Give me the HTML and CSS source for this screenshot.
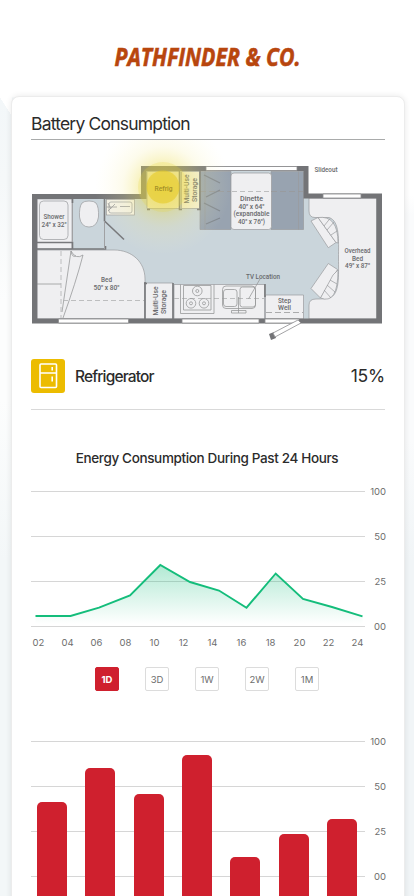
FILE: index.html
```html
<!DOCTYPE html>
<html lang="en">
<head>
<meta charset="utf-8">
<meta name="viewport" content="width=device-width, initial-scale=1">
<title>Pathfinder &amp; Co.</title>
<link rel="stylesheet" href="styles.css">
</head>
<body>
<div class="page">
  <header class="brand">
    <svg width="250" height="40" viewBox="83 36 250 40" role="img" aria-label="Pathfinder &amp; Co.">
      <text class="brand-text" x="114.500" y="66" textLength="186" lengthAdjust="spacingAndGlyphs">PATHFINDER &amp; CO.</text>
    </svg>
  </header>
  <main class="card">
    <h1 class="title"><span>Battery Consumption</span></h1>
    <svg class="plan" width="392" height="219" viewBox="12 140 392 219">
      <defs>
        <radialGradient id="halo">
          <stop offset="0" stop-color="#ebd32c" stop-opacity=".55"/>
          <stop offset=".36" stop-color="#ebdc50" stop-opacity=".36"/>
          <stop offset=".6" stop-color="#f3e98e" stop-opacity=".17"/>
          <stop offset="1" stop-color="#fff8c8" stop-opacity="0"/>
        </radialGradient>
      </defs>
      <path fill="#cad5db" d="M37 198H146V171H304V198H377V319H37z"/>
      <g fill="#efeff1" stroke="#9a9b9d" stroke-width=".7">
        <path d="M37 199H72V249H37z"/>
        <rect x="39.500" y="201" width="28.500" height="38.500" rx="4"/>
        <path d="M37 250H114C132 250 145 262 145 279V319H37z"/>
        <path d="M82 203Q84 201 89 201T96 203Q99 207 98.500 217Q97 227 89 227T79.500 217Q79 207 82 203z"/>
        <rect x="106.500" y="199.500" width="28" height="15.500" fill="#f3f1e8"/>
        <rect x="109" y="202" width="23" height="11" rx="2" fill="#f3f1e8"/>
        <path d="M309 198V211Q309 217.500 315 217.500H329C340 221 338.500 240 338.500 258S340 295 329 298Q326 299 316 299Q309 299 309 305V319H377V198z"/>
        <path d="M311 221L318 217.500L336 242.500L328.300 247.700z"/>
        <path d="M318 217.500Q338 215 338 243L336 242.500zM324 226L330 218.500M327 230L334 222M331 235L337 231"/>
        <path d="M311 288.500L328.300 263.500L337.500 269.500L320.500 298z"/>
        <path d="M320.500 298Q338 305 338 270L333 275zM324 290L331 298M327 285L335 292M330 280L337 284"/>
        <path d="M145 283H173V319H145zM174 284.500H264.500V319H174zM265.500 295H303.500V319H265.500z"/>
        <path fill="#98a3b0" d="M200 171.500H231V229.500H200zM271 171.500H303.500V229.500H271zM205 171.500V229.500M298.500 171.500V229.500"/>
        <rect x="231" y="173" width="40.500" height="56.500" rx="3"/>
        <path fill="#f4efd4" d="M147 171.500H179.500V208.500H147zM181.500 171.500H199.500V208.500H181.500z"/>
      </g>
      <g fill="none" stroke="#98999b" stroke-width=".8">
        <path d="M37 284H61M71 251L62 312M71 251Q76 260 83 255Q76 282 63 318M71 251Q72 258 76 256"/>
        <path stroke-dasharray="5 3" stroke="#b0b1b3" d="M61 251V318M63 300.500H144M174 298.500H264M232 191.500H271"/>
        <path stroke-dasharray="6 3" d="M200 191.500H231M271 191.500H303M266 312.500H303"/>
        <path d="M204 175L220 183M206 197L220 190M204 203L220 211M206 224L220 218" stroke="#7f868f" stroke-width="1.300"/>
        <path d="M180.500 284.500V313.500H214V284.500M183.500 285.500H211V310H183.500zM106.500 207H117M108 203L111 209M108 211L115 204M120 206.500H130"/>
        <circle cx="197.300" cy="291" r="4.800"/><circle cx="197.300" cy="291" r="1.500"/>
        <circle cx="191" cy="303.300" r="4.800"/><circle cx="191" cy="303.300" r="1.500"/>
        <circle cx="204" cy="303.300" r="4.800"/><circle cx="204" cy="303.300" r="1.500"/>
        <rect x="222.500" y="286" width="33" height="22.500" rx="3.500"/>
        <rect x="223.500" y="289.500" width="13.500" height="17" rx="2.500"/>
        <rect x="240" y="287" width="15.500" height="20" rx="2.500"/>
        <path d="M238.500 297V313M231.500 310.500H246V313H231.500zM260 279L248.500 299"/>
      </g>
      <g fill="none" stroke="#77787b" stroke-width="2">
        <path stroke-width="1.600" d="M37 242.500H72.500V249M37 249H105.500V246M72.500 199V203M104.500 199V221L124 239.500M145 282V319M144 283.500H147M173 283V319M179.500 171V209.500H182M200 171V209.500H197M147 209.500H150M265 284V297"/>
        <path stroke-width="1" stroke="#a0a1a3" d="M72.500 203V242M104.500 221V249"/>
      </g>
      <g fill="#737477">
        <path d="M32 194H141V166H308.500V193.500H382V323.500H32zM37.300 199V318.500H376.300V198.500H303.500V171H146.500V199z" fill-rule="evenodd"/>
        <path d="M269 334L274 332L276 338L271 340z"/>
      </g>
      <g fill="#fff" stroke="#8b8c8e" stroke-width=".8">
        <path d="M206 166.500H297V170.500H206zM323 194H361V198H323zM58.500 319H128.500V323H58.500zM182 319H259V323H182zM265 319H299V323H265z"/>
        <path d="M273 333L298 320L301 323L275 337z"/>
      </g>
      <g class="plan-text">
        <text x="54" y="219" textLength="21" lengthAdjust="spacingAndGlyphs">Shower</text>
        <text x="54" y="227" textLength="25" lengthAdjust="spacingAndGlyphs">24" x 32"</text>
        <text x="106.500" y="282" textLength="11" lengthAdjust="spacingAndGlyphs">Bed</text>
        <text x="106.500" y="290" textLength="26" lengthAdjust="spacingAndGlyphs">50" x 80"</text>
        <text transform="translate(189 189) rotate(-90)" textLength="29" lengthAdjust="spacingAndGlyphs">Multi-Use</text>
        <text transform="translate(197 190) rotate(-90)" textLength="24" lengthAdjust="spacingAndGlyphs">Storage</text>
        <text transform="translate(158 301) rotate(-90)" textLength="29" lengthAdjust="spacingAndGlyphs">Multi-Use</text>
        <text transform="translate(166 302) rotate(-90)" textLength="24" lengthAdjust="spacingAndGlyphs">Storage</text>
        <text x="251.500" y="201" textLength="23" lengthAdjust="spacingAndGlyphs">Dinette</text>
        <text x="251.500" y="208.500" textLength="26" lengthAdjust="spacingAndGlyphs">40" x 64"</text>
        <text x="251.500" y="216" textLength="36" lengthAdjust="spacingAndGlyphs">(expandable</text>
        <text x="251.500" y="223.500" textLength="27" lengthAdjust="spacingAndGlyphs">40" x 76")</text>
        <text x="326" y="171.500" textLength="23" lengthAdjust="spacingAndGlyphs">Slideout</text>
        <text x="263" y="279" textLength="34" lengthAdjust="spacingAndGlyphs">TV Location</text>
        <text x="284.500" y="302.500" textLength="13" lengthAdjust="spacingAndGlyphs">Step</text>
        <text x="284.500" y="310" textLength="13" lengthAdjust="spacingAndGlyphs">Well</text>
        <text x="357.500" y="253" textLength="26" lengthAdjust="spacingAndGlyphs">Overhead</text>
        <text x="357.500" y="260.500" textLength="11" lengthAdjust="spacingAndGlyphs">Bed</text>
        <text x="357.500" y="268" textLength="25" lengthAdjust="spacingAndGlyphs">49" x 87"</text>
      </g>
      <circle cx="163" cy="187" r="68" fill="url(#halo)"/>
      <circle cx="163" cy="187" r="25" fill="#ead43c" fill-opacity=".22"/>
      <circle cx="163" cy="187" r="16.500" fill="#e6c91d" fill-opacity=".55"/>
      <g class="plan-text"><text class="lit" x="163.500" y="191" textLength="18" lengthAdjust="spacingAndGlyphs">Refrig</text></g>
    </svg>
    <section class="device">
      <span class="device-icon">
        <svg width="34" height="34" viewBox="0 0 34 34" fill="none" stroke="#fff" stroke-width="1.600">
          <rect x="9" y="5" width="16.500" height="23.500" rx="1"/>
          <path d="M9 14H25.500M21.200 8V11.500M21.200 17.500V22.500"/>
        </svg>
      </span>
      <span class="device-name">Refrigerator</span>
      <span class="device-value">15%</span>
    </section>
    <h2 class="subtitle"><span>Energy Consumption During Past 24 Hours</span></h2>
    <div class="chart">
      <div class="plot">
        <svg class="area" width="334" height="136" viewBox="31 491 334 136">
          <defs>
            <linearGradient id="fade" gradientUnits="userSpaceOnUse" x1="0" y1="565" x2="0" y2="624">
              <stop offset="0" stop-color="#14bd7b" stop-opacity=".33"/>
              <stop offset="1" stop-color="#14bd7b" stop-opacity="0"/>
            </linearGradient>
          </defs>
          <path fill="url(#fade)" d="M35.500 616H70.500L99 607.700L130 595.500L160.300 565L190 582L219 590.500L246.500 607.700L275.700 573.500L303 599L332 607L362.500 616.300V626H35.500z"/>
          <path fill="none" stroke="#14bd7b" stroke-width="1.900" d="M35.500 616H70.500L99 607.700L130 595.500L160.300 565L190 582L219 590.500L246.500 607.700L275.700 573.500L303 599L332 607L362.500 616.300"/>
        </svg>
      </div>
      <div class="scale"><span>100</span><span>50</span><span>25</span><span>00</span></div>
    </div>
    <div class="hours"><span>02</span><span>04</span><span>06</span><span>08</span><span>10</span><span>12</span><span>14</span><span>16</span><span>18</span><span>20</span><span>22</span><span>24</span></div>
    <nav class="ranges"><button class="range active">1D</button><button class="range">3D</button><button class="range">1W</button><button class="range">2W</button><button class="range">1M</button></nav>
    <div class="chart">
      <div class="plot bars">
        <i style="height:134px"></i><i style="height:168px"></i><i style="height:142px"></i><i style="height:181.500px"></i><i style="height:79px"></i><i style="height:102.500px"></i><i style="height:117.500px"></i>
      </div>
      <div class="scale"><span>100</span><span>50</span><span>25</span><span>00</span></div>
    </div>
  </main>
</div>
</body>
</html>
```
FILE: styles.css
```css
* { box-sizing: border-box; }
body { margin: 0; font-family: Inter, "Liberation Sans", sans-serif; color: #2b2b2b; }
.page {
  height: 896px;
  overflow: hidden;
  padding: 0 9px 0 11px;
  background:
    linear-gradient(57deg, transparent 50%, #fff 51%) 0 97px / 12px 20px no-repeat,
    linear-gradient(#fff 97px, #f3f7f9 98px, #f5f8f9 180px, #fcfdfd 300px, #fcfdfd 400px, #f3f7f8 560px) 0 0 / 50% 100% no-repeat,
    linear-gradient(#fff 195px, #fafbfc 215px, #fafbfc 440px, #f1f5f7 560px) 100% 0 / 50% 100% no-repeat;
}
.brand { height: 96px; padding-top: 36px; display: flex; justify-content: center; }
.brand svg { display: block; }
.brand-text { font: italic 700 25px "Open Sans", sans-serif; fill: #b8460e; stroke: #b8460e; stroke-width: .6px; }
.card {
  height: 960px;
  border: 1px solid #ececec;
  border-radius: 8px;
  background: #fff;
  box-shadow: 0 0 6px rgba(0, 0, 0, .09);
  padding: 15px 19px 0;
}
.title {
  margin: 0;
  height: 28px;
  border-bottom: 1px solid #a9abab;
  font-size: 17.5px;
  font-weight: 400;
  line-height: 24px;
  letter-spacing: -.8px;
}
.plan { display: block; margin: 0 -19px; }
.plan-text { font: 500 7.800px Roboto, sans-serif; fill: #68696c; text-anchor: middle; }
.lit { fill: #a38f28; }
.device {
  height: 51px;
  display: flex;
  align-items: flex-start;
  border-bottom: 1px solid #d9d9d9;
  line-height: 34px;
}
.device-icon { width: 34px; height: 34px; border-radius: 3px; background: #ecbc00; margin-right: 10px; }
.device-icon svg { display: block; }
.device-name { font-size: 15.5px; font-weight: 500; letter-spacing: -.85px; line-height: 36px; }
.device-value { margin-left: auto; font-size: 17.5px; letter-spacing: -.2px; }
.subtitle {
  margin: 38px 2px 0 0;
  height: 43px;
  font-size: 13.5px;
  line-height: 20px;
  font-weight: 550;
  text-align: center;
  letter-spacing: -.36px;
}
.chart { display: flex; justify-content: space-between; height: 136px; }
.plot {
  width: 334px;
  height: 136px;
  background: repeating-linear-gradient(#d6d6d6 0 1px, transparent 1px 45px);
}
.area { display: block; }
.scale {
  display: flex;
  flex-direction: column;
  gap: 31px;
  margin: -6px -1px 0 0;
  font-size: 9.5px;
  line-height: 14px;
  text-align: right;
  color: #6d6d6d;
}
.hours {
  width: 348px;
  display: flex;
  margin: 9px 0 0 -7px;
  font-size: 9.5px;
  line-height: 14px;
  text-align: center;
  color: #6d6d6d;
}
.hours span { flex: 1; }
.ranges { display: flex; justify-content: center; gap: 26px; margin: 17px 2px 50px 0; }
.range {
  width: 24px;
  height: 24px;
  padding: 0;
  border: 1px solid #dcdcdc;
  border-radius: 2px;
  background: #fff;
  color: #6d6d6d;
  font: 9.5px Inter, sans-serif;
}
.range.active { background: #cf202e; border-color: #cf202e; color: #fff; font-weight: 700; }
.bars { height: 195px; padding: 0 8px 0 6px; display: flex; justify-content: space-between; align-items: flex-end; }
.bars i { width: 30px; border-radius: 5px 5px 0 0; background: #cf202e; }
```
